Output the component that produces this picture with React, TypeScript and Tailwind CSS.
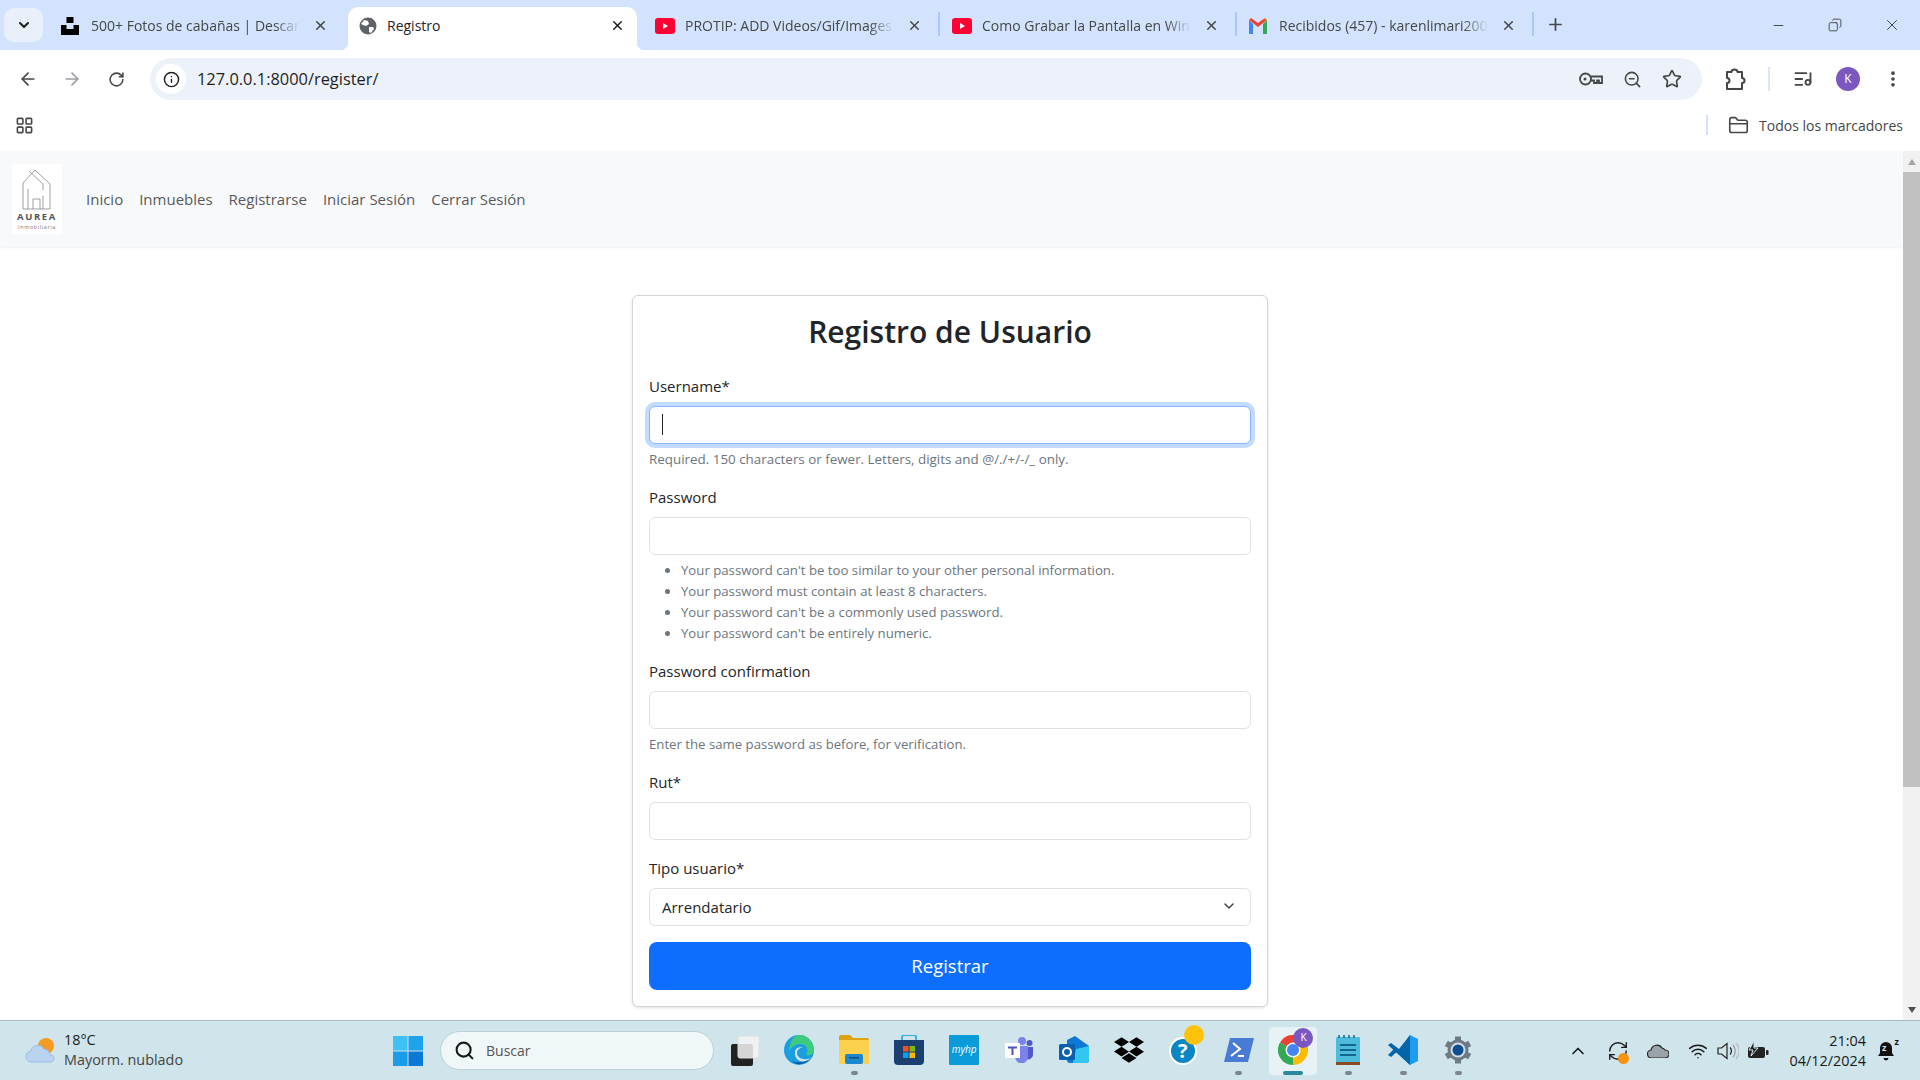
import { ArrowLeft, ArrowRight, ChevronDown, ChevronUp, FolderClosed, LayoutGrid, Minus, MoreVertical, Plus, RotateCw, Search, Star, Wifi, X, ZoomOut, Info, Copy, ListMusic, RefreshCw } from "lucide-react";
import { FaDropbox } from "react-icons/fa";
import type { ReactNode } from "react";

const UnsplashIcon = () => (
	<svg width="18" height="18" viewBox="0 0 18 18" className="shrink-0">
		<rect x="5.5" y="0" width="7" height="6" fill="#000" />
		<path d="M0 8h5.5v4h7V8H18v10H0z" fill="#000" />
	</svg>
);

const GlobeIcon = () => (
	<svg width="18" height="18" viewBox="0 0 18 18" className="shrink-0">
		<circle cx="9" cy="9" r="8.5" fill="#5f6368" />
		<path d="M5 3l4 1 1 3-3 2-3-1-2-1zM10 10l4 0 1 2-3 4-2-1z" fill="#fff" />
	</svg>
);

const YoutubeIcon = () => (
	<svg width="20" height="16" viewBox="0 0 20 16" className="shrink-0">
		<rect width="20" height="16" rx="3" fill="#ff0033" />
		<path d="M8 5l5 3-5 3z" fill="#fff" />
	</svg>
);

const GmailIcon = () => (
	<svg width="18" height="16" viewBox="0 0 18 16" className="shrink-0">
		<path d="M0 2v14h4V6z" fill="#4285f4" />
		<path d="M14 6v10h4V2z" fill="#34a853" />
		<path d="M0 2l9 7 9-7-2-2-7 5-7-5z" fill="#ea4335" />
		<path d="M14 1.400l4 .6v-1z" fill="#fbbc04" />
	</svg>
);

const tabs = [
	{ icon: <UnsplashIcon />, title: "500+ Fotos de cabañas | Descargar" },
	{ icon: <GlobeIcon />, title: "Registro", active: true },
	{ icon: <YoutubeIcon />, title: "PROTIP: ADD Videos/Gif/Images to" },
	{ icon: <YoutubeIcon />, title: "Como Grabar la Pantalla en Windows" },
	{ icon: <GmailIcon />, title: "Recibidos (457) - karenlimari2000" },
];

const TabStrip = () => (
	<div className="flex h-[50px] shrink-0 bg-[#d3e3fd]">
		<div className="ml-1 mt-2 mr-[8px] flex h-[34px] w-[39px] items-center justify-center rounded-[10px] bg-[#e9f0fc] text-[#1f1f1f]">
			<ChevronDown size={16} strokeWidth={3} />
		</div>
		<div className="flex gap-2">
			{tabs.map((tab, i) => (
				<div
					key={tab.title}
					className={
						tab.active
							? "relative mt-[7px] flex h-[43px] w-[289px] items-center rounded-t-[10px] bg-white pb-[6px] pl-[11px] pr-[12px] text-[#1f1f1f]"
							: "relative mt-[7px] flex h-[43px] w-[289px] items-center pb-[6px] pl-[10px] pr-[12px] text-[#444746]"
					}
				>
					{tab.active && (
						<>
							<div className="absolute bottom-0 -left-2 h-2 w-2 bg-[radial-gradient(circle_at_0_0,transparent_8px,#fff_8.5px)]" />
							<div className="absolute -right-2 bottom-0 h-2 w-2 bg-[radial-gradient(circle_at_100%_0,transparent_8px,#fff_8.5px)]" />
						</>
					)}
					<span className="flex w-[30px] justify-start">{tab.icon}</span>
					<span
						className={
							tab.active
								? "-ml-[2px] flex-1 overflow-hidden whitespace-nowrap text-[14px]"
								: "w-[209px] overflow-hidden whitespace-nowrap text-[14px] [mask-image:linear-gradient(to_right,#000_88%,transparent)]"
						}
					>
						{tab.title}
					</span>
					<X size={15} strokeWidth={2.4} className="ml-auto shrink-0" />
					{!tab.active && i > 1 && (
						<div className="absolute -right-[6px] top-[5px] h-6 w-[2px] bg-[#a8c7fa]" />
					)}
				</div>
			))}
		</div>
		<div className="ml-[13px] mt-[6px] flex h-[36px] w-[28px] items-center justify-center text-[#444746]">
			<Plus size={19} strokeWidth={2.2} />
		</div>
		<div className="ml-auto flex text-[#333]">
			<div className="flex h-[50px] w-[56px] items-center justify-center">
				<Minus size={15} strokeWidth={1.4} />
			</div>
			<div className="flex h-[50px] w-[58px] items-center justify-center">
				<Copy size={14} strokeWidth={1.4} className="-scale-x-100" />
			</div>
			<div className="flex h-[50px] w-[56px] items-center justify-center">
				<X size={18} strokeWidth={1.2} />
			</div>
		</div>
	</div>
);

const KeyIcon = () => (
	<svg width="24" height="16" viewBox="0 0 24 16" fill="none" stroke="#444746" strokeWidth="1.800">
		<circle cx="6.500" cy="8" r="5.500" />
		<circle cx="6" cy="8" r="1.500" fill="#444746" stroke="none" />
		<path d="M12 5.500h11V12h-3V9.500h-2V12h-3V9.500h-3" />
	</svg>
);

const ExtensionIcon = () => (
	<svg width="22" height="24" viewBox="0 0 22 24" fill="none" stroke="#444746" strokeWidth="2" strokeLinejoin="round">
		<path d="M3 5h4.500a3 2.500 0 0 1 6 0H18v6a2.500 2.500 0 0 1 0 5v6H3v-6a2.500 2.500 0 0 0 0-5z" />
	</svg>
);

const Toolbar = () => (
	<div className="flex h-[53px] shrink-0 items-start rounded-t-[8px] bg-white pt-2">
		<div className="ml-[6px] flex w-[144px] shrink-0 text-[#444746]">
			<div className="flex h-[42px] w-[44px] items-center justify-center">
				<ArrowLeft size={20} strokeWidth={2} />
			</div>
			<div className="flex h-[42px] w-[44px] items-center justify-center text-[#9a9ea3]">
				<ArrowRight size={20} strokeWidth={2} />
			</div>
			<div className="flex h-[42px] w-[44px] items-center justify-center">
				<RotateCw size={17} strokeWidth={2.2} />
			</div>
		</div>
		<div className="flex h-[42px] w-[1552px] shrink-0 items-center rounded-full bg-[#edf2fa] pl-[6px] pr-[20px]">
			<div className="flex h-[30px] w-[30px] items-center justify-center rounded-full bg-white text-[#1f1f1f]">
				<Info size={17} strokeWidth={2} />
			</div>
			<span className="ml-[11px] text-[16.400px] text-[#1f1f1f]">127.0.0.1:8000/register/</span>
			<div className="ml-auto flex items-center gap-[20px] text-[#444746]">
				<KeyIcon />
				<ZoomOut size={19} strokeWidth={2} />
				<Star size={20} strokeWidth={2} />
			</div>
		</div>
		<div className="flex h-[42px] flex-1 items-center text-[#444746]">
			<div className="flex w-[66px] justify-center">
				<ExtensionIcon />
			</div>
			<div className="h-[24px] w-[2px] bg-[#dbe6f7]" />
			<div className="flex w-[66px] justify-center">
				<ListMusic size={20} strokeWidth={2.2} />
			</div>
			<div className="flex h-[24px] w-[24px] items-center justify-center rounded-full bg-[#7b57c0] text-[12px] text-white">
				K
			</div>
			<div className="flex w-[66px] justify-center">
				<MoreVertical size={20} strokeWidth={2.4} />
			</div>
		</div>
	</div>
);

const BookmarksBar = () => (
	<div className="flex h-[48px] shrink-0 items-center bg-white pb-[4px] pl-[15px] pr-[17px] text-[#444746]">
		<LayoutGrid size={19} strokeWidth={2} />
		<div className="ml-auto h-[20px] w-[2px] bg-[#d3e3fd]" />
		<FolderClosed size={21} strokeWidth={1.8} className="ml-[20px]" />
		<span className="ml-[10px] text-[14px]">Todos los marcadores</span>
	</div>
);

const AureaLogo = () => (
	<div className="flex h-[70px] w-[50px] flex-col items-center bg-white">
		<svg width="50" height="48" viewBox="0 0 50 48" fill="none" stroke="#777" strokeWidth="0.7">
			<path d="M11 19L23 6l15 14v25H11z" />
			<path d="M17 7l14 13v6M31 32v13M16 25v20M21 45V35h7v10" />
		</svg>
		<span className="-mt-[1px] text-[9.5px] font-bold leading-[12px] tracking-[1.6px] text-[#555]">AUREA</span>
		<span className="text-[5.5px] leading-[9px] tracking-[0.6px] text-[#777]">Inmobiliaria</span>
	</div>
);

const NavBar = () => (
	<nav className="flex h-[96px] shrink-0 items-center gap-[16px] bg-[#f8f9fa] pl-[12px] shadow-[0_1px_2px_rgba(0,0,0,0.06)]">
		<div className="mr-[8px]">
			<AureaLogo />
		</div>
		{["Inicio", "Inmuebles", "Registrarse", "Iniciar Sesión", "Cerrar Sesión"].map((link) => (
			<a key={link} className="text-[15px] text-[#595a5c]">
				{link}
			</a>
		))}
	</nav>
);

const Field = ({ label, children }: { label: string; children: ReactNode }) => (
	<div className="mb-4">
		<label className="mb-2 block text-[15px] leading-[24px] text-[#212529]">{label}</label>
		{children}
	</div>
);

const inputClass = "block h-[38px] w-full rounded-[6px] border border-[#dee2e6] bg-white px-3 text-[15px] text-[#212529] outline-none";
const helpClass = "mt-[5px] text-[13.200px] leading-[20px] text-[#6c757d]";

const RegisterForm = () => (
	<div className="ml-[632px] mt-12 w-[636px] rounded-[6px] border border-[#d3d5d7] bg-white p-4 shadow-[0_1px_3px_rgba(0,0,0,0.12)]">
		<h2 className="mb-[23px] pt-[1px] text-center text-[30px] font-semibold leading-[38px] text-[#212529]">Registro de Usuario</h2>
		<form>
			<Field label="Username*">
				<div className="relative">
					<input className="block h-[38px] w-full rounded-[6px] border border-[#86b7fe] bg-white px-3 shadow-[0_0_0_4px_rgba(13,110,253,0.25)] outline-none" />
					<div className="absolute left-[13px] top-[8px] h-[21px] w-[1px] bg-[#212529]" />
				</div>
				<div className="mt-[5px] text-[13.400px] leading-[20px] text-[#6c757d]">Required. 150 characters or fewer. Letters, digits and @/./+/-/_ only.</div>
			</Field>
			<div className="mb-4">
				<label className="mb-2 block text-[15px] leading-[24px] text-[#212529]">Password</label>
				<input type="password" className={inputClass} />
				<ul className="mt-[5px] -mb-[1px] list-disc pl-8 text-[13.200px] leading-[21px] text-[#6c757d]">
					<li>Your password can't be too similar to your other personal information.</li>
					<li>Your password must contain at least 8 characters.</li>
					<li>Your password can't be a commonly used password.</li>
					<li>Your password can't be entirely numeric.</li>
				</ul>
			</div>
			<Field label="Password confirmation">
				<input type="password" className={inputClass} />
				<div className={helpClass}>Enter the same password as before, for verification.</div>
			</Field>
			<Field label="Rut*">
				<input className={inputClass} />
			</Field>
			<Field label="Tipo usuario*">
				<div className="relative">
					<select className={`${inputClass} appearance-none`} defaultValue="Arrendatario">
						<option>Arrendatario</option>
					</select>
					<ChevronDown size={16} strokeWidth={2} className="absolute right-[14px] top-[10px] text-[#343a40]" />
				</div>
			</Field>
			<button type="button" className="block h-[48px] w-full rounded-[8px] bg-[#0d6efd] text-[18.500px] text-white">
				Registrar
			</button>
		</form>
	</div>
);

const Scrollbar = () => (
	<div className="flex w-[17px] shrink-0 flex-col items-center bg-[#f1f1f1]">
		<div className="flex h-[21px] items-center justify-center">
			<div className="h-0 w-0 border-x-[4px] border-b-[6px] border-x-transparent border-b-[#a3a3a3]" />
		</div>
		<div className="h-[615px] w-full bg-[#c1c1c1]" />
		<div className="mt-auto flex h-[21px] items-center justify-center">
			<div className="h-0 w-0 border-x-[4px] border-t-[6px] border-x-transparent border-t-[#505050]" />
		</div>
	</div>
);

const WeatherIcon = () => (
	<svg width="31" height="31" viewBox="0 0 31 31">
		<circle cx="21" cy="11" r="8" fill="#f59b23" />
		<path d="M7 27a5.500 5.500 0 0 1-1-11 7 7 0 0 1 13-2 6 6 0 0 1 6 6 3.500 3.500 0 0 1 1 7z" fill="#b9d3f1" stroke="#8fb5e4" strokeWidth="0.8" />
	</svg>
);

const WindowsLogo = () => (
	<svg width="30" height="30" viewBox="0 0 30 30">
		<rect width="14.500" height="14.500" fill="#3fc1f6" />
		<rect x="15.500" width="14.500" height="14.500" fill="#1ea2ec" />
		<rect y="15.500" width="14.500" height="14.500" fill="#1a9ce8" />
		<rect x="15.500" y="15.500" width="14.500" height="14.500" fill="#0a78d4" />
	</svg>
);

const TaskView = () => (
	<svg width="28" height="30" viewBox="0 0 28 30">
		<rect x="0" y="8" width="22" height="22" rx="2" fill="#222" />
		<rect x="7" y="0" width="21" height="22" rx="2" fill="#f4f4f4" fillOpacity="0.85" stroke="#ddd" />
	</svg>
);

const EdgeIcon = () => (
	<svg width="30" height="30" viewBox="0 0 30 30">
		<circle cx="15" cy="15" r="15" fill="#1b9de2" />
		<path d="M15 0a15 15 0 0 1 15 15c0 4-4 6-8 5 4-6-1-12-7-11-5 1-8 4-10 7C6 7 9 0 15 0z" fill="#3ecb7e" />
		<path d="M11 17c0-4 5-6 9-4-3-1-7 1-7 5 0 5 7 8 14 5-4 6-17 5-16-6z" fill="#cfe5eb" />
		<path d="M27 23c-5 7-15 8-19 3 4 2 14 2 19-3z" fill="#0c59a4" />
	</svg>
);

const FolderIcon = () => (
	<svg width="30" height="29" viewBox="0 0 30 29">
		<path d="M0 2a2 2 0 0 1 2-2h9l3 3h14a2 2 0 0 1 2 2v3H0z" fill="#e0a20c" />
		<path d="M0 5h30v22a2 2 0 0 1-2 2H2a2 2 0 0 1-2-2z" fill="#fcd14d" />
		<rect x="6" y="19" width="18" height="10" rx="2" fill="#1a87cf" />
		<rect x="10" y="22" width="10" height="1.500" fill="#0c4f80" />
	</svg>
);

const StoreIcon = () => (
	<svg width="30" height="30" viewBox="0 0 30 30">
		<path d="M8 5V2a2 2 0 0 1 2-2h10a2 2 0 0 1 2 2v3" fill="none" stroke="#37a8e8" strokeWidth="1.800" />
		<path d="M0 5h30v21a4 4 0 0 1-4 4H4a4 4 0 0 1-4-4z" fill="#1c3f72" />
		<rect x="9" y="11" width="5.500" height="5.500" fill="#f25022" />
		<rect x="15.500" y="11" width="5.500" height="5.500" fill="#7fba00" />
		<rect x="9" y="17.500" width="5.500" height="5.500" fill="#00a4ef" />
		<rect x="15.500" y="17.500" width="5.500" height="5.500" fill="#ffb900" />
	</svg>
);

const MyHpIcon = () => (
	<div className="flex h-[30px] w-[30px] items-center justify-center rounded-[1px] bg-[#0a9bd8] text-[10px] italic text-white">
		myhp
	</div>
);

const TeamsIcon = () => (
	<svg width="28" height="26" viewBox="0 0 28 26">
		<circle cx="17" cy="4" r="4" fill="#7b83eb" />
		<circle cx="24.500" cy="6" r="3" fill="#5059c9" />
		<path d="M21 10h7v8a5 5 0 0 1-7 4z" fill="#5059c9" />
		<path d="M10 9h13v11a6.500 6.500 0 0 1-13 0z" fill="#7b83eb" />
		<rect y="6" width="15" height="15" fill="#fff" />
		<path d="M3 9.500h9v2H8.500V18h-2v-6.500H3z" fill="#4b53bc" />
	</svg>
);

const OutlookIcon = () => (
	<svg width="30" height="28" viewBox="0 0 30 28">
		<path d="M8 4l8-4 14 10v14a3 3 0 0 1-3 3H11a3 3 0 0 1-3-3z" fill="#0f78d4" />
		<path d="M17 13l13-3v14a3 3 0 0 1-3 3H14z" fill="#33c6f0" />
		<rect y="8" width="16" height="16" rx="1.500" fill="#0a5fb0" />
		<circle cx="8" cy="16" r="4" fill="none" stroke="#fff" strokeWidth="2" />
	</svg>
);

const HelpIcon = () => (
	<div className="relative h-[30px] w-[30px]">
		<div className="flex h-[28px] w-[28px] translate-y-[2px] items-center justify-center rounded-full border-2 border-white bg-[#0a86c4] text-[20px] font-bold text-white">
			?
		</div>
		<div className="absolute -right-[5px] -top-[10px] h-[20px] w-[20px] rounded-full bg-[#ffc20a]" />
	</div>
);

const PowerShellIcon = () => (
	<svg width="30" height="24" viewBox="0 0 30 24">
		<path d="M6 0h24l-6 24H0z" fill="#4a7bd4" />
		<path d="M9 5l7 6-9 7M14 18h6" fill="none" stroke="#fff" strokeWidth="2" />
	</svg>
);

const ChromeIcon = () => (
	<div className="relative h-[30px] w-[30px]">
		<svg width="30" height="30" viewBox="0 0 30 30">
			<path d="M15 15L28 7.500A15 15 0 0 0 2 7.500z" fill="#ea4335" />
			<path d="M15 15L2 7.500A15 15 0 0 0 15 30z" fill="#34a853" />
			<path d="M15 15L15 30A15 15 0 0 0 28 7.500z" fill="#fbbc04" />
			<circle cx="15" cy="15" r="7.500" fill="#fff" />
			<circle cx="15" cy="15" r="6" fill="#4285f4" />
		</svg>
		<div className="absolute -right-[5px] -top-[7px] flex h-[20px] w-[20px] items-center justify-center rounded-full bg-[#7b57c0] text-[10px] text-white">
			K
		</div>
	</div>
);

const NotepadIcon = () => (
	<svg width="24" height="30" viewBox="0 0 24 30">
		<rect y="2" width="24" height="26" rx="1" fill="#4dbcdc" />
		<rect y="27" width="24" height="3" fill="#8a4a22" />
		<rect x="4" y="9" width="16" height="2" fill="#12668f" />
		<rect x="4" y="14" width="16" height="2" fill="#12668f" />
		<rect x="4" y="19" width="16" height="2" fill="#12668f" />
		<path d="M3 0v3M8 0v3M13 0v3M18 0v3" stroke="#12668f" strokeWidth="1.500" />
	</svg>
);

const VsCodeIcon = () => (
	<svg width="30" height="30" viewBox="0 0 30 30">
		<path d="M22 0l8 4v22l-8 4-12-12z" fill="#1f9cf0" />
		<path d="M22 0v30L0 10l3-2 8 6z" fill="#0065a9" />
		<path d="M0 20l3 2 8-7-3-3z" fill="#0065a9" />
	</svg>
);

const SettingsIcon = () => (
	<svg width="30" height="30" viewBox="0 0 30 30">
		<circle cx="15" cy="15" r="10.500" fill="#6d7a86" />
		<path d="M15 1.500v27M3.300 8.300l23.400 13.400M3.300 21.700l23.400-13.400" stroke="#6d7a86" strokeWidth="6" />
		<circle cx="15" cy="15" r="7.500" fill="#d5dde3" />
		<circle cx="15" cy="15" r="5.500" fill="#0d4d92" />
	</svg>
);

const VolumeIcon = () => (
	<svg width="22" height="20" viewBox="0 0 22 20" fill="none" stroke="#222" strokeWidth="1.200">
		<path d="M1 7h3.500L10 2.500v15L4.500 13H1z" />
		<path d="M13 6.500a5 5 0 0 1 0 7" />
		<path d="M16 4a9 9 0 0 1 0 12" stroke="#999" />
		<path d="M19 2a12 12 0 0 1 0 16" stroke="#bbb" />
	</svg>
);

const BatteryIcon = () => (
	<svg width="22" height="20" viewBox="0 0 22 20">
		<rect x="1" y="6" width="17" height="11" rx="2" fill="#222" />
		<rect x="19" y="9" width="2.500" height="5" rx="1" fill="#222" />
		<path d="M7 0L2 9h4l-2 6 7-8H7z" fill="#222" stroke="#cfe5eb" strokeWidth="1" />
	</svg>
);

const SnoozeBell = () => (
	<div className="relative">
		<svg width="18" height="20" viewBox="0 0 18 20">
			<path d="M9 1a6 6 0 0 1 6 6v5l2 3H1l2-3V7a6 6 0 0 1 6-6z" fill="#111" />
			<path d="M6.500 17a2.500 2.500 0 0 0 5 0z" fill="#111" />
		</svg>
		<span className="absolute left-[5px] top-[2px] text-[9px] font-bold leading-[10px] text-[#cfe5eb]">z</span>
		<span className="absolute -right-[4px] -top-[4px] text-[9px] font-bold leading-[10px] text-[#111]">z</span>
	</div>
);

const apps: { icon: ReactNode; dot?: boolean; active?: boolean }[] = [
	{ icon: <EdgeIcon /> },
	{ icon: <FolderIcon />, dot: true },
	{ icon: <StoreIcon /> },
	{ icon: <MyHpIcon /> },
	{ icon: <TeamsIcon /> },
	{ icon: <OutlookIcon /> },
	{ icon: <FaDropbox size={30} color="#000" /> },
	{ icon: <HelpIcon /> },
	{ icon: <PowerShellIcon />, dot: true },
	{ icon: <ChromeIcon />, active: true },
	{ icon: <NotepadIcon />, dot: true },
	{ icon: <VsCodeIcon />, dot: true },
	{ icon: <SettingsIcon />, dot: true },
];

const Taskbar = () => (
	<div className="flex h-[60px] shrink-0 items-center border-t border-[#a9bdc6] bg-[#cfe5eb] pl-[25px] pr-[20px]">
		<div className="flex w-[368px] items-center">
			<WeatherIcon />
			<div className="ml-[8px] -mt-[1px] text-[14.400px] leading-[20px]">
				<div className="text-[#1a1a1a]">18°C</div>
				<div className="text-[#444]">Mayorm. nublado</div>
			</div>
		</div>
		<WindowsLogo />
		<div className="ml-[17px] flex h-[39px] w-[274px] items-center rounded-full border border-[#bcd0d6] bg-[#eff7f9] pl-[13px] text-[#1a1a1a]">
			<Search size={21} strokeWidth={2.4} />
			<span className="ml-[11px] text-[14px] text-[#555]">Buscar</span>
		</div>
		<div className="ml-[3px] flex w-[55px] justify-center">
			<TaskView />
		</div>
		{apps.map((app, i) => (
			<div key={i} className="relative flex h-[48px] w-[54.900px] items-center justify-center">
				{app.active && <div className="absolute inset-y-0 left-[3px] w-[48px] rounded-[4px] bg-[#e6f2f5]" />}
				<div className="relative -mt-[2px]">{app.icon}</div>
				{app.dot && <div className="absolute bottom-0 h-[4px] w-[7px] rounded-full bg-[#7b878c]" />}
				{app.active && <div className="absolute bottom-0 h-[4px] w-[20px] rounded-full bg-[#2a8a9a]" />}
			</div>
		))}
		<div className="ml-auto flex items-center text-[#1a1a1a]">
			<div className="flex w-[40px] justify-center">
				<ChevronUp size={20} strokeWidth={2} />
			</div>
			<div className="relative flex w-[40px] justify-center">
				<RefreshCw size={22} strokeWidth={1.5} />
				<div className="absolute bottom-[-2px] right-[9px] h-[11px] w-[11px] rounded-full bg-[#f7930e]" />
			</div>
			<div className="flex w-[40px] justify-center">
				<svg width="22" height="14" viewBox="0 0 22 14">
					<path d="M5 14a4 4 0 0 1-1-8 6 6 0 0 1 11-2 5 5 0 0 1 3 2 4 4 0 0 1 0 8z" fill="#9aa4a8" stroke="#222" strokeWidth="1.200" />
				</svg>
			</div>
			<div className="ml-[5px] flex w-[30px] justify-center">
				<Wifi size={20} strokeWidth={1.8} />
			</div>
			<div className="flex w-[30px] justify-center">
				<VolumeIcon />
			</div>
			<div className="flex w-[30px] justify-center">
				<BatteryIcon />
			</div>
			<div className="w-[93px] text-right text-[14.400px] leading-[20px] text-[#1a1a1a]">
				<div>21:04</div>
				<div>04/12/2024</div>
			</div>
			<div className="flex w-[34px] justify-center pl-[6px]">
				<SnoozeBell />
			</div>
		</div>
	</div>
);

export default function App() {
	return (
		<div className="flex h-screen w-full flex-col overflow-hidden bg-white font-['Open_Sans',sans-serif]">
			<TabStrip />
			<Toolbar />
			<BookmarksBar />
			<div className="flex min-h-0 flex-1">
				<main className="min-w-0 flex-1 overflow-hidden bg-white">
					<NavBar />
					<RegisterForm />
				</main>
				<Scrollbar />
			</div>
			<Taskbar />
		</div>
	);
}
